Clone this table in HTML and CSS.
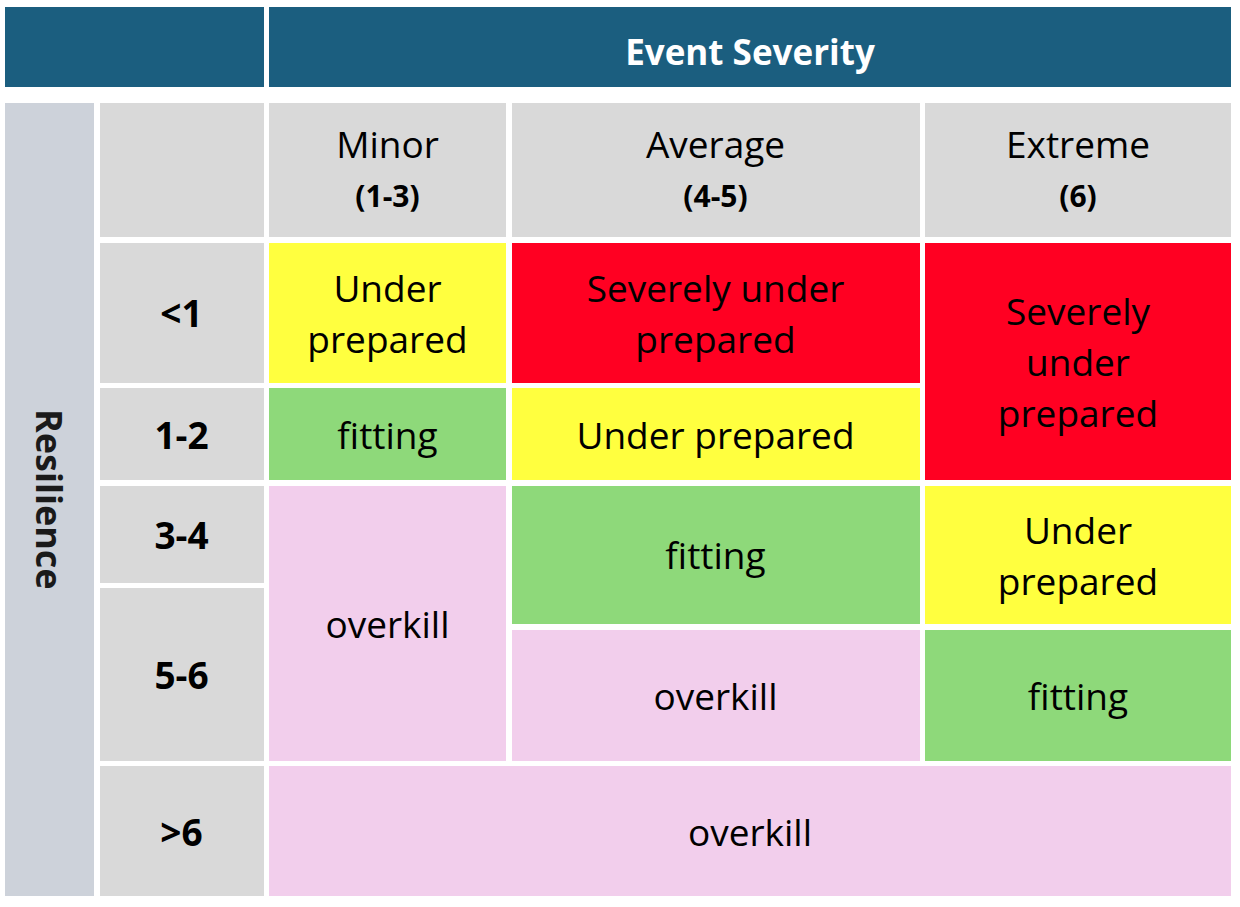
FILE: index.html
```html
<!DOCTYPE html>
<html lang="en">
<head>
<meta charset="utf-8">
<title>Event Severity vs Resilience</title>
<link rel="stylesheet" href="styles.css">
</head>
<body>
<div class="page">
  <div class="head-grid">
    <div class="head blank"></div>
    <div class="head title">Event Severity</div>
  </div>
  <div class="matrix">
    <div class="res">Resilience</div>
    <div class="cell grey c2 r1"></div>
    <div class="cell grey c3 r1 sev"><span class="name">Minor</span><span class="range">(1-3)</span></div>
    <div class="cell grey c4 r1 sev"><span class="name">Average</span><span class="range">(4-5)</span></div>
    <div class="cell grey c5 r1 sev"><span class="name">Extreme</span><span class="range">(6)</span></div>

    <div class="cell grey lbl c2 r2">&lt;1</div>
    <div class="cell yellow c3 r2">Under<br>prepared</div>
    <div class="cell red c4 r2">Severely under<br>prepared</div>
    <div class="cell red c5 r2-3">Severely<br>under<br>prepared</div>

    <div class="cell grey lbl c2 r3">1-2</div>
    <div class="cell green c3 r3">fitting</div>
    <div class="cell yellow c4 r3">Under prepared</div>

    <div class="cell grey lbl c2 r4">3-4</div>
    <div class="cell pink c3 r4-6">overkill</div>
    <div class="cell green c4 r4-5">fitting</div>
    <div class="cell yellow c5 r4-5">Under<br>prepared</div>

    <div class="cell grey lbl c2 r5-6">5-6</div>
    <div class="cell pink c4 r6">overkill</div>
    <div class="cell green c5 r6">fitting</div>

    <div class="cell grey lbl c2 r7">&gt;6</div>
    <div class="cell pink c3-5 r7">overkill</div>
  </div>
</div>
</body>
</html>
```

FILE: styles.css
```css
html, body {
  margin: 0;
  padding: 0;
  background: #ffffff;
}

.page {
  padding: 7px 0 0 5px;
  width: 1226px;
  font-family: "Open Sans", Lato, sans-serif;
  color: #000;
}

.head-grid {
  display: grid;
  grid-template-columns: 258.5px 1fr;
  column-gap: 5.5px;
  height: 80px;
}

.head {
  background: #1b5e7f;
}

.title {
  color: #ffffff;
  font-weight: 700;
  font-size: 35px;
  padding-top: 8px;
  box-sizing: border-box;
  display: flex;
  align-items: center;
  justify-content: center;
}

.matrix {
  margin-top: 16px;
  display: grid;
  grid-template-columns: 89px 164px 237px 408px 306px;
  grid-template-rows: 134px 140px 92px 97px 36px 131px 130px;
  gap: 5.5px;
}

.res {
  grid-column: 1;
  grid-row: 1 / 8;
  background: #cdd2da;
  writing-mode: vertical-rl;
  display: flex;
  align-items: center;
  justify-content: center;
  font-weight: 700;
  font-size: 36px;
  color: #1a1a1a;
}

.cell {
  display: flex;
  flex-direction: column;
  align-items: center;
  justify-content: center;
  text-align: center;
  font-size: 37px;
  line-height: 51px;
}

.lbl {
  font-weight: 700;
  font-size: 37px;
}

.sev .name {
  font-size: 37px;
  line-height: 52px;
}

.sev .range {
  font-weight: 700;
  font-size: 30px;
  line-height: 52px;
}

.grey { background: #d9d9d9; }
.yellow { background: #ffff3f; }
.red { background: #ff0022; }
.green { background: #8ed97a; }
.pink { background: #f2ceec; }

.c2 { grid-column: 2; }
.c3 { grid-column: 3; }
.c4 { grid-column: 4; }
.c5 { grid-column: 5; }
.c3-5 { grid-column: 3 / 6; }

.r1 { grid-row: 1; }
.r2 { grid-row: 2; }
.r3 { grid-row: 3; }
.r4 { grid-row: 4; }
.r6 { grid-row: 6; }
.r7 { grid-row: 7; }
.r2-3 { grid-row: 2 / 4; }
.r4-5 { grid-row: 4 / 6; }
.r4-6 { grid-row: 4 / 7; }
.r5-6 { grid-row: 5 / 7; }
```
